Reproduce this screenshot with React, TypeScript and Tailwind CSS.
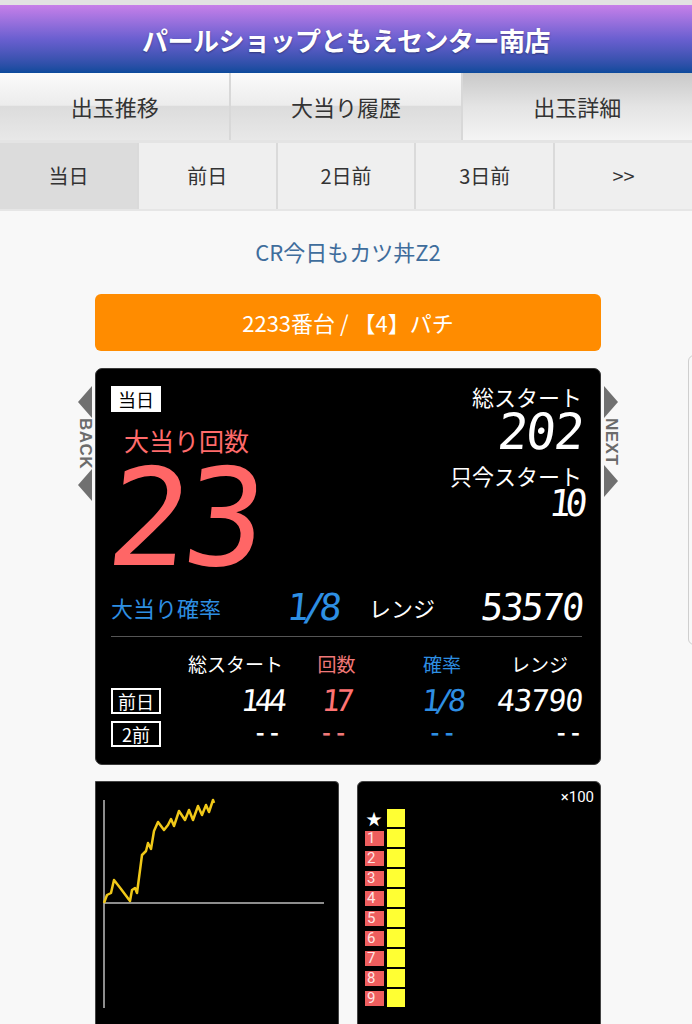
import { useMemo } from 'react';

const jp = "font-['Noto_Sans_CJK_JP','Noto_Sans',sans-serif]";
const seg = "font-['DejaVu_Sans_Mono',monospace] inline-block -skew-x-6 leading-none";
const cols = 'grid grid-cols-[61px_111px_107px_104px_1fr] items-center';

function Tri({ dir }: { dir: 'left' | 'right' }) {
  return (
    <svg width="14" height="32" viewBox="0 0 14 32" className="block">
      {dir === 'left' ? (
        <polygon points="14,0 0,16 14,32" fill="#707070" />
      ) : (
        <polygon points="0,0 14,16 0,32" fill="#707070" />
      )}
    </svg>
  );
}

function SideNav({ label, dir }: { label: string; dir: 'left' | 'right' }) {
  return (
    <div className="flex flex-col items-center w-[14px]">
      <Tri dir={dir} />
      <span className="[writing-mode:vertical-rl] font-['Liberation_Sans',sans-serif] font-bold text-[17px] leading-[14px] text-[#6b6b6b] my-[4px] tracking-[0.5px]">
        {label}
      </span>
      <Tri dir={dir} />
    </div>
  );
}

function Chart() {
  // points relative to card origin
  const pts = useMemo(
    () =>
      [
        [103, 903], [106, 895], [110, 893], [113, 880], [120, 889], [129, 901],
        [131, 890], [134, 888], [136, 893], [141, 855], [145, 851], [147, 843],
        [150, 849], [153, 831], [157, 822], [163, 830], [167, 825], [170, 819],
        [173, 826], [178, 811], [184, 820], [188, 810], [192, 820], [197, 806],
        [201, 815], [205, 805], [208, 812], [212, 800], [213, 803],
      ]
        .map(([x, y]) => `${x - 95},${y - 782}`)
        .join(' '),
    []
  );
  return (
    <svg width="244" height="242" viewBox="0 0 244 242" className="block">
      <line x1="8" y1="18" x2="8" y2="226" stroke="#bdbdbd" strokeWidth="1.5" />
      <line x1="8" y1="121" x2="228" y2="121" stroke="#bdbdbd" strokeWidth="1.5" />
      <polyline points={pts} fill="none" stroke="#f0c818" strokeWidth="2.5" strokeLinejoin="round" />
    </svg>
  );
}

export default function App() {
  const mainTabs = ['出玉推移', '大当り履歴', '出玉詳細'];
  const dayTabs = ['当日', '前日', '2日前', '3日前', '>>'];
  const ranks = ['1', '2', '3', '4', '5', '6', '7', '8', '9'];

  return (
    <div className={`w-[692px] h-[1024px] overflow-hidden bg-[#f8f8f8] ${jp}`}>
      <div className="h-[5px] bg-[#e2e2e2]" />
      {/* Header */}
      <div className="h-[68px] bg-gradient-to-b from-[#c77fe9] via-[#6a5fd0] to-[#0a4a9c] flex items-center justify-center">
        <h1 className="text-white text-[26px] font-bold tracking-[-0.5px] [text-shadow:0_1px_2px_rgba(0,0,0,0.35)]">
          パールショップともえセンター南店
        </h1>
      </div>

      {/* Main tabs */}
      <div className="flex h-[70px] border-b-[3px] border-[#e4e4e4]">
        {mainTabs.map((t, i) => (
          <div
            key={t}
            className={`flex-1 flex items-center justify-center text-[22px] text-[#333] border-r-2 border-[#d8d8d8] last:border-r-0 ${
              i === 2
                ? 'bg-gradient-to-b from-[#c9c9c9] via-[#e4e4e4] to-[#f4f4f4]'
                : 'bg-[linear-gradient(to_bottom,#fbfbfb_0%,#ececec_48%,#dcdcdc_50%,#e8e8e8_100%)]'
            }`}
          >
            {t}
          </div>
        ))}
      </div>

      {/* Day tabs */}
      <div className="flex h-[68px] border-b-2 border-[#e6e6e6]">
        {dayTabs.map((t, i) => (
          <div
            key={t}
            className={`flex-1 flex items-center justify-center text-[20px] text-[#333] border-r-2 border-[#dadada] last:border-r-0 ${
              i === 0 ? 'bg-[#dcdcdc]' : 'bg-[#efefef]'
            }`}
          >
            {t}
          </div>
        ))}
      </div>

      {/* Slides */}
      <div className="flex overflow-hidden">
        <div className="w-[688px] shrink-0 flex">
          <div className="w-[92px] flex justify-end pt-[175px]">
            <SideNav label="BACK" dir="left" />
          </div>
          <div className="w-[506px] ml-[3px] shrink-0">
            <p className="text-center text-[22px] text-[#3f6d9c] mt-[25px] leading-[30px]">CR今日もカツ丼Z2</p>
            <div className="mt-[28px] h-[57px] rounded-[6px] bg-[#ff8c00] flex items-center justify-center text-white text-[22px]">
              2233番台 / 【4】パチ
            </div>

            {/* Display panel */}
            <div className="mt-[17px] h-[397px] rounded-[7px] bg-black border border-[#3a3a3a] pl-[15px] pr-[18px] pt-[17px]">
              <div className="flex justify-between">
                <div>
                  <div className="inline-block bg-white text-black text-[18px] leading-[26px] px-[7px]">当日</div>
                  <p className="text-[#ff6b6b] text-[25px] leading-[30px] mt-[13px] ml-[13px]">大当り回数</p>
                  <p className="mt-[-4px] ml-[-2px] h-[135px]">
                    <span className={`${seg} text-[#ff6666] text-[135px] tracking-[-6px]`}>23</span>
                  </p>
                </div>
                <div className="text-right text-white flex flex-col items-end">
                  <p className="text-[22px] leading-[22px] mt-[-1px]">総スタート</p>
                  <span className={`${seg} text-[50px] tracking-[-2px]`}>202</span>
                  <p className="text-[22px] leading-[24px] mt-[6px]">只今スタート</p>
                  <span className={`${seg} text-[37px] tracking-[-6px] mt-[-2px]`}>10</span>
                </div>
              </div>

              <div className="flex items-center h-[40px] mt-[1px]">
                <span className="text-[#2e8fe3] text-[22px] w-[176px]">大当り確率</span>
                <span className="w-[82px]">
                  <span className={`${seg} text-[#2e8fe3] text-[37px] tracking-[-6px]`}>1/8</span>
                </span>
                <span className="text-white text-[22px] w-[100px]">レンジ</span>
                <span className="flex-1 text-right">
                  <span className={`${seg} text-white text-[37px] tracking-[-2px]`}>53570</span>
                </span>
              </div>

              <div className="h-px bg-[#555] mt-[9px]" />

              <div className={`${cols} text-[19px] mt-[14px] leading-[26px]`}>
                <span />
                <span className="text-white text-right">総スタート</span>
                <span className="text-[#f07878] text-center">回数</span>
                <span className="text-[#2e8fe3] text-center">確率</span>
                <span className="text-white text-right pr-[14px]">レンジ</span>
              </div>
              <div className={`${cols} mt-[9px] h-[28px]`}>
                <span className="border-2 border-white text-white text-[18px] leading-[22px] w-[50px] text-center">前日</span>
                <span className="text-right">
                  <span className={`${seg} text-white text-[30px] tracking-[-4px]`}>144</span>
                </span>
                <span className="text-center">
                  <span className={`${seg} text-[#ff7373] text-[30px] tracking-[-4px]`}>17</span>
                </span>
                <span className="text-center">
                  <span className={`${seg} text-[#2e8fe3] text-[30px] tracking-[-5px]`}>1/8</span>
                </span>
                <span className="text-right">
                  <span className={`${seg} text-white text-[30px] tracking-[-1px]`}>43790</span>
                </span>
              </div>
              <div className={`${cols} mt-[5px] h-[28px] text-[24px] font-bold`}>
                <span className="border-2 border-white text-white text-[18px] font-normal leading-[22px] w-[50px] text-center">2前</span>
                <span className="text-white text-right pr-[4px] mt-[-6px]">- -</span>
                <span className="text-[#f07878] text-center pr-[6px] mt-[-6px]">- -</span>
                <span className="text-[#2e8fe3] text-center mt-[-6px]">- -</span>
                <span className="text-white text-right pr-[2px] mt-[-6px]">- -</span>
              </div>
            </div>

            {/* Bottom charts */}
            <div className="flex gap-[18px] mt-[16px]">
              <div className="w-[244px] h-[250px] bg-black rounded-tr-[4px] border border-[#444]">
                <Chart />
              </div>
              <div className="w-[244px] h-[250px] bg-black rounded-[6px] border border-[#444]">
                <div className="flex justify-end pr-[6px] pt-[7px] text-white text-[15px] font-['Roboto',sans-serif] leading-[16px]">×100</div>
                <div className="flex flex-col gap-[2px] pl-[6px] mt-[4px]">
                  <div className="flex items-center gap-[3px]">
                    <span className="w-[20px] text-center text-white text-[16px] leading-[18px]">★</span>
                    <span className="w-[18px] h-[18px] bg-[#ffff33]" />
                  </div>
                  {ranks.map((r) => (
                    <div key={r} className="flex items-center gap-[3px]">
                      <span className="w-[19px] h-[15px] ml-[1px] bg-[#ee5e5e] text-[#ffe4e4] text-[15px] leading-[15px] pl-[2px] font-['Roboto',sans-serif]">
                        {r}
                      </span>
                      <span className="w-[18px] h-[18px] bg-[#ffff33]" />
                    </div>
                  ))}
                </div>
              </div>
            </div>
          </div>
          <div className="w-[87px] pt-[175px] pl-[3px]">
            <SideNav label="NEXT" dir="right" />
          </div>
        </div>
        <div className="w-[200px] shrink-0 h-[290px] mt-[144px] rounded-[6px] border border-[#cfcfcf] bg-[#f8f8f8]" />
      </div>
    </div>
  );
}
